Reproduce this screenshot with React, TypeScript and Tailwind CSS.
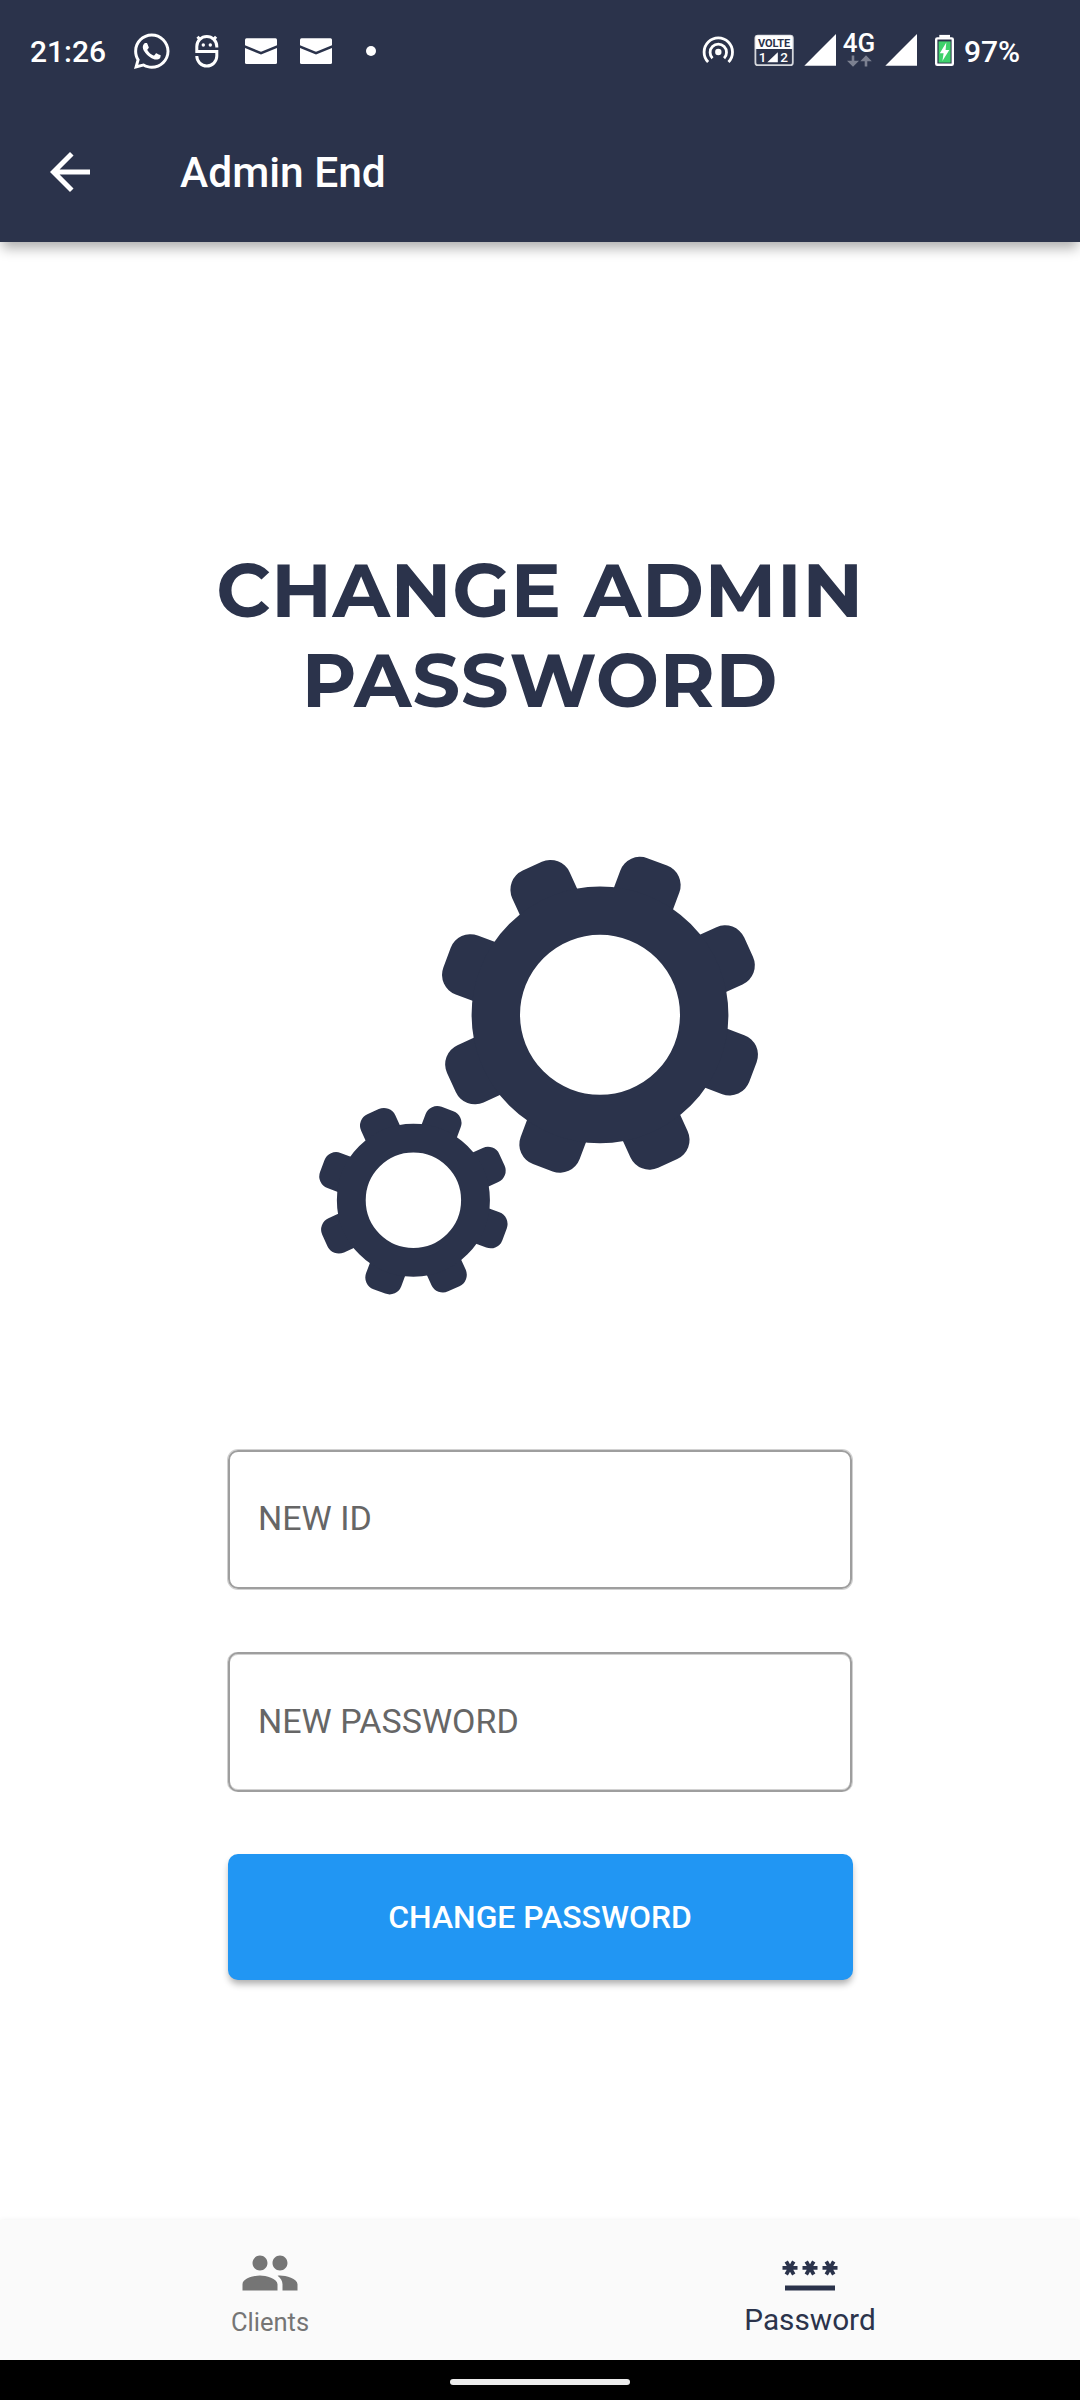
import { MdArrowBack, MdPassword, MdPeople } from "react-icons/md";
import { FaWhatsapp } from "react-icons/fa";

const TEETH = [20.5, 65.5, 110.5, 155.5, 200.5, 245.5, 290.5, 335.5];

function Gear({ x, y, scale }: { x: number; y: number; scale: number }) {
  return (
    <g transform={`translate(${x} ${y}) scale(${scale})`}>
      {TEETH.map((a) => (
        <rect key={a} x="-31.5" y="-163.3" width="63" height="70" rx="21" transform={`rotate(${a})`} />
      ))}
      <circle r="104.2" fill="none" stroke="#2b334b" strokeWidth="48.4" />
    </g>
  );
}

function MintIcon() {
  return (
    <svg className="ml-[25px] h-10 w-[25px]" viewBox="194.5 31 25 40" fill="none" stroke="#fff" strokeWidth="3">
      <path d="M216.3 47.5V46.5a10 10 0 0 0-20 0V51.4H216.3V56a10 10 0 0 1-20 0" />
      <path d="M197 36.8l3 3.2M215.6 36.8l-3 3.2" />
      <g fill="#fff" stroke="none">
        <circle cx="202.8" cy="45" r="1.7" />
        <circle cx="209.8" cy="45" r="1.7" />
      </g>
    </svg>
  );
}

function MailIcon({ className }: { className: string }) {
  return (
    <svg className={className} viewBox="0 31 32 40">
      <rect x="0" y="38.3" width="32" height="25.7" rx="1.5" fill="#fff" />
      <path d="M-1 46.3L16 53.2L33 46.3" fill="none" stroke="#2b334b" strokeWidth="2.6" />
    </svg>
  );
}

function SignalIcon({ className }: { className: string }) {
  return (
    <svg className={className} viewBox="0 31 32 40">
      <path d="M0.3 65.8L32 34V65.8Z" fill="#fff" />
    </svg>
  );
}

function StatusBar() {
  return (
    <div className="flex h-[102px] items-center pl-[30px] text-[30px] font-medium text-white">
      <span className="w-[76px]">21:26</span>
      <FaWhatsapp className="ml-7 h-[40.6px] w-[35.5px] shrink-0" />
      <MintIcon />
      <MailIcon className="ml-[25.5px] h-10 w-8" />
      <MailIcon className="ml-[23px] h-10 w-8" />
      <span className="ml-[34px] size-[10px] rounded-full bg-white" />

      <svg className="ml-[326px] h-10 w-8" viewBox="702 31 32 40" fill="none" stroke="#fff" strokeWidth="2.8">
        <circle cx="718.3" cy="52" r="3.2" fill="#fff" stroke="none" />
        <path d="M708.1 62a14.2 14.2 0 1 1 20.4 0" />
        <path d="M712.5 58.2a8.2 8.2 0 1 1 11.6 0" />
      </svg>

      <svg className="ml-5 h-10 w-10" viewBox="754 31 40 40">
        <rect x="755.4" y="35.6" width="37.4" height="29.6" rx="2.5" fill="none" stroke="#d5d7dc" strokeWidth="1.8" />
        <path d="M755.5 49V38a2.5 2.5 0 0 1 2.5-2.5H790a2.5 2.5 0 0 1 2.5 2.5V49Z" fill="#fff" />
        <text x="774.1" y="47" textAnchor="middle" fontSize="11" fontWeight="700" fill="#2b334b">VOLTE</text>
        <text x="758.7" y="62.2" fontSize="13.5" fontWeight="500" fill="#fff">1</text>
        <text x="780.3" y="62.2" fontSize="13.5" fontWeight="500" fill="#fff">2</text>
        <path d="M767.3 62.2L777.8 52.2V62.2Z" fill="#fff" />
      </svg>

      <SignalIcon className="ml-[10px] h-10 w-8" />

      <div className="ml-[6px] flex h-10 w-[34px] flex-col items-center">
        <span className="-mt-1 h-[28px] text-[26px] leading-[32px]">4G</span>
        <svg className="h-3 w-[25px] overflow-visible" viewBox="848 54.5 25 12" fill="#7c8191">
          <path d="M852.7 55H855.3V60.3H860L854 66.3L848 60.3H852.7Z" />
          <path d="M865.7 66V60.7H861.3L867 54.7L872.8 60.7H868.3V66Z" />
        </svg>
      </div>

      <SignalIcon className="ml-[9px] h-10 w-8" />

      <svg className="ml-[18px] h-10 w-[19px]" viewBox="935 31 19 40">
        <rect x="939.3" y="34.9" width="10.7" height="3" fill="#fff" />
        <rect x="936.2" y="38.4" width="16.6" height="26.4" rx="1" fill="none" stroke="#fff" strokeWidth="2.4" />
        <rect x="938.6" y="41.4" width="12" height="21.2" fill="#3fd16b" />
        <path d="M946.3 42.6L939.8 53.3H943.6L942.4 61L949.3 50H945.6Z" fill="#fff" />
      </svg>
      <span className="ml-[10px]">97%</span>
    </div>
  );
}

function AppBar() {
  return (
    <div className="flex h-[140px] items-center pl-10 text-white">
      <MdArrowBack className="size-[60px]" />
      <h1 className="mt-0.5 ml-20 text-[42.5px] font-medium">Admin End</h1>
    </div>
  );
}

export default function App() {
  return (
    <div className="flex h-[2400px] w-[1080px] flex-col overflow-hidden bg-white font-['Roboto',sans-serif]">
      <header className="relative bg-[#2b334b] shadow-[0_8px_12px_-2px_rgba(0,0,0,0.32)]">
        <StatusBar />
        <AppBar />
      </header>

      <main className="flex flex-1 flex-col items-center">
        <h2 className="mt-[303px] text-center font-['Montserrat','Inter',sans-serif] text-[75px] leading-[90px] font-bold tracking-[0.75px] whitespace-nowrap text-[#2b334b]">
          CHANGE ADMIN
          <br />
          PASSWORD
        </h2>

        <svg className="mt-[115px] h-[470px] w-[480px]" viewBox="300 840 480 470" fill="#2b334b">
          <Gear x={600} y={1014.8} scale={1} />
          <Gear x={413.4} y={1200.2} scale={0.596} />
        </svg>

        <div className="mt-[140px] flex h-[139px] w-[624px] items-center rounded-[10px] border-2 border-[#9e9e9e] pb-0.5 pl-[28px] text-[34px] text-[#666] shadow-[0_0_0_1px_#d2d2d2]">
          NEW ID
        </div>
        <div className="mt-[63px] flex h-[140px] w-[624px] items-center rounded-[10px] border-2 border-[#9e9e9e] pb-px pl-[28px] text-[34px] text-[#666] shadow-[-1px_0_0_#d2d2d2,1px_0_0_#d2d2d2,inset_0_1px_0_#d2d2d2,inset_0_-1px_0_#d2d2d2]">
          NEW PASSWORD
        </div>
        <button className="mt-[62px] flex h-[126px] w-[625px] items-center justify-center rounded-[10px] bg-[#2196f3] pt-0.5 text-[31.875px] font-medium text-white shadow-[0_5px_7px_-1px_rgba(0,0,0,0.32)]">
          CHANGE PASSWORD
        </button>
      </main>

      <nav className="flex h-[140px] bg-[#fafafa] shadow-[0_1px_6px_rgba(0,0,0,0.08)]">
        <div className="flex flex-1 flex-col items-center pt-[23px] text-[#757575]">
          <MdPeople className="size-[60px]" />
          <span className="mt-1 text-[25.5px] leading-[30px]">Clients</span>
        </div>
        <div className="flex flex-1 flex-col items-center pt-[23px] text-[#2b334b]">
          <MdPassword className="size-[60px]" />
          <span className="text-[29.75px] leading-[34px]">Password</span>
        </div>
      </nav>

      <footer className="relative flex h-10 justify-center bg-black pt-[19px]">
        <div className="h-[6px] w-[180px] rounded-full bg-[#ececec]" />
      </footer>
    </div>
  );
}
